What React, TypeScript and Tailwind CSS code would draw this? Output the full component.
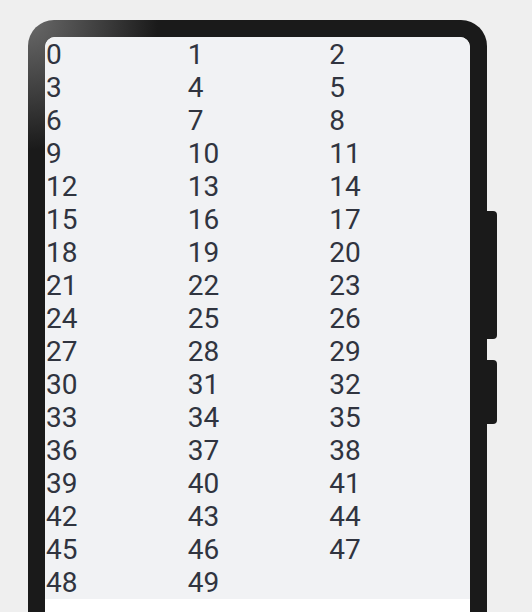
export default function App() {
  const items = Array.from({ length: 50 }, (_, i) => i);

  return (
    <div className="h-[612px] w-full overflow-hidden bg-[#efefef]">
      <div className="relative ml-[28px] mt-[20px] w-[459px]">
        {/* side buttons */}
        <div className="absolute left-[459px] top-[191px] h-[128px] w-[10px] rounded-r-[4px] bg-[#1a1a1a]" />
        <div className="absolute left-[459px] top-[340px] h-[64px] w-[10px] rounded-r-[4px] bg-[#1a1a1a]" />

        {/* frame */}
        <div className="h-[700px] rounded-[26px] bg-[radial-gradient(circle_at_0px_0px,#6a6a6a_0px,#3a3a3a_80px,#1a1a1a_130px)] p-[17px]">
          <div className="h-full overflow-hidden rounded-t-[10px] bg-white">
            <div className="grid grid-cols-3 bg-[#f1f2f4] pt-px font-['Roboto',sans-serif] text-[28px] leading-[33px] text-[#30343f]">
              {items.map((n) => (
                <div key={n} className="pl-px">
                  {n}
                </div>
              ))}
            </div>
          </div>
        </div>
      </div>
    </div>
  );
}
